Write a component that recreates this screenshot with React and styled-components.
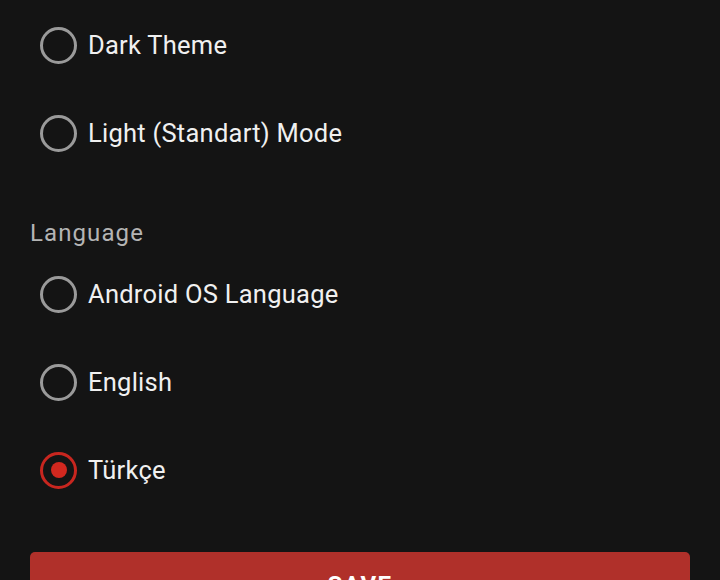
import React, { useState } from "react";
import styled, { createGlobalStyle } from "styled-components";

const Global = createGlobalStyle`
  html, body { margin: 0; padding: 0; background: #141414; }
  body { font-family: Roboto, "Noto Sans", Arial, sans-serif; }
`;

const Page = styled.div`
  width: 720px;
  height: 580px;
  overflow: hidden;
  background: #141414;
  padding: 1px 30px 0 30px;
  box-sizing: border-box;
  display: flex;
  flex-direction: column;
`;

const Group = styled.div`
  display: flex;
  flex-direction: column;
`;

const Label = styled.div`
  color: #b4b4b4;
  font-size: 24px;
  letter-spacing: 1.1px;
  line-height: 28px;
  height: 28px;
  margin-top: 42px;
  margin-bottom: 3px;
`;

const Row = styled.label`
  display: flex;
  align-items: center;
  height: 88px;
  padding-left: 10px;
  gap: 11px;
  cursor: pointer;
`;

const Ring = styled.span`
  width: 37px;
  height: 37px;
  box-sizing: border-box;
  border-radius: 50%;
  border: 3.5px solid ${(p) => (p.$on ? "#c8261f" : "#9a9a9a")};
  display: flex;
  align-items: center;
  justify-content: center;
  flex: none;
`;

const Dot = styled.span`
  width: 16px;
  height: 16px;
  border-radius: 50%;
  background: #d2281f;
`;

const Text = styled.span`
  color: #f0f0f0;
  font-size: 25.5px;
  letter-spacing: 0.25px;
`;

const Button = styled.button`
  margin-top: 38px;
  width: 660px;
  height: 66px;
  flex: none;
  border: none;
  border-radius: 5px;
  background: #b0302a;
  color: #ffffff;
  font-family: Roboto, Arial, sans-serif;
  font-weight: 700;
  font-size: 24px;
  letter-spacing: 1.5px;
`;

function Radio({ label, on, onClick }) {
  return (
    <Row onClick={onClick}>
      <Ring $on={on}>{on && <Dot />}</Ring>
      <Text>{label}</Text>
    </Row>
  );
}

export default function App() {
  const [theme, setTheme] = useState(null);
  const [lang, setLang] = useState("tr");
  return (
    <>
      <Global />
      <Page>
        <Group>
          <Radio label="Dark Theme" on={theme === "dark"} onClick={() => setTheme("dark")} />
          <Radio label="Light (Standart) Mode" on={theme === "light"} onClick={() => setTheme("light")} />
        </Group>
        <Label>Language</Label>
        <Group>
          <Radio label="Android OS Language" on={lang === "os"} onClick={() => setLang("os")} />
          <Radio label="English" on={lang === "en"} onClick={() => setLang("en")} />
          <Radio label="Türkçe" on={lang === "tr"} onClick={() => setLang("tr")} />
        </Group>
        <Button>SAVE</Button>
      </Page>
    </>
  );
}
